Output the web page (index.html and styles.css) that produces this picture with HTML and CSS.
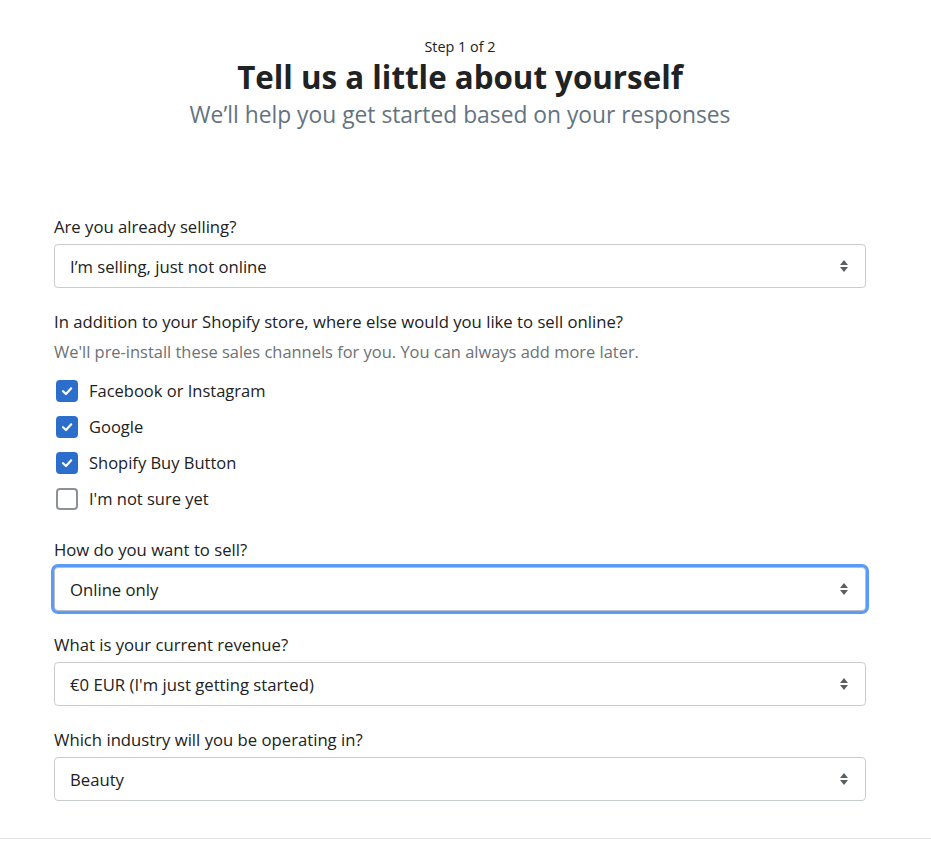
FILE: index.html
```html
<!DOCTYPE html>
<html lang="en">
<head>
    <meta charset="UTF-8">
    <meta name="viewport" content="width=device-width, initial-scale=1.0">
    <title>Tell us a little about yourself</title>
    <link rel="stylesheet" href="styles.css">
</head>
<body>
    <div class="page">
        <div class="header">
            <p class="step">Step 1 of 2</p>
            <h1>Tell us a little about yourself</h1>
            <p class="subtitle">We’ll help you get started based on your responses</p>
        </div>

        <form class="survey">
            <div class="field">
                <label>Are you already selling?</label>
                <div class="select">
                    <span>I’m selling, just not online</span>
                    <svg class="arrows" width="10" height="14" viewBox="0 0 10 14"><path d="M5 1 L9 6 H1 Z M1 8 H9 L5 13 Z" fill="#5c5f62"/></svg>
                </div>
            </div>

            <div class="field">
                <label>In addition to your Shopify store, where else would you like to sell online?</label>
                <p class="help">We'll pre-install these sales channels for you. You can always add more later.</p>
                <div class="checks">
                    <div class="check-row">
                        <span class="box checked"><svg width="14" height="14" viewBox="0 0 14 14"><path d="M3 7.2 L6 10 L11.2 4.3" fill="none" stroke="#fff" stroke-width="2.2" stroke-linecap="round" stroke-linejoin="round"/></svg></span>
                        Facebook or Instagram
                    </div>
                    <div class="check-row">
                        <span class="box checked"><svg width="14" height="14" viewBox="0 0 14 14"><path d="M3 7.2 L6 10 L11.2 4.3" fill="none" stroke="#fff" stroke-width="2.2" stroke-linecap="round" stroke-linejoin="round"/></svg></span>
                        Google
                    </div>
                    <div class="check-row">
                        <span class="box checked"><svg width="14" height="14" viewBox="0 0 14 14"><path d="M3 7.2 L6 10 L11.2 4.3" fill="none" stroke="#fff" stroke-width="2.2" stroke-linecap="round" stroke-linejoin="round"/></svg></span>
                        Shopify Buy Button
                    </div>
                    <div class="check-row">
                        <span class="box"></span>
                        I'm not sure yet
                    </div>
                </div>
            </div>

            <div class="field">
                <label>How do you want to sell?</label>
                <div class="select focused">
                    <span>Online only</span>
                    <svg class="arrows" width="10" height="14" viewBox="0 0 10 14"><path d="M5 1 L9 6 H1 Z M1 8 H9 L5 13 Z" fill="#5c5f62"/></svg>
                </div>
            </div>

            <div class="field">
                <label>What is your current revenue?</label>
                <div class="select">
                    <span>€0 EUR (I'm just getting started)</span>
                    <svg class="arrows" width="10" height="14" viewBox="0 0 10 14"><path d="M5 1 L9 6 H1 Z M1 8 H9 L5 13 Z" fill="#5c5f62"/></svg>
                </div>
            </div>

            <div class="field">
                <label>Which industry will you be operating in?</label>
                <div class="select">
                    <span>Beauty</span>
                    <svg class="arrows" width="10" height="14" viewBox="0 0 10 14"><path d="M5 1 L9 6 H1 Z M1 8 H9 L5 13 Z" fill="#5c5f62"/></svg>
                </div>
            </div>
        </form>
    </div>
    <div class="footer"></div>
</body>
</html>
```

FILE: styles.css
```css
/* Reset default margin and padding */
* {
    margin: 0;
    padding: 0;
    box-sizing: border-box;
}

body {
    font-family: "Open Sans", "Noto Sans", Arial, sans-serif;
    color: #202223;
    background-color: #fff;
}

.page {
    width: 823px;
    padding-right: 11px;
    margin: 0 auto;
}

/* Heading block */
.header {
    text-align: center;
    padding-top: 37px;
}

.step {
    font-size: 14.4px;
    line-height: 20px;
}

h1 {
    font-size: 31.3px;
    line-height: 40px;
    font-weight: 700;
    color: #202223;
}

.subtitle {
    font-size: 22.8px;
    line-height: 34px;
    color: #637381;
    margin-top: 1px;
}

/* Form */
.survey {
    margin-top: 83px;
}

.field {
    margin-bottom: 22px;
}

label {
    display: block;
    font-size: 16.7px;
    line-height: 24px;
    margin-bottom: 5px;
}

.select {
    display: flex;
    align-items: center;
    justify-content: space-between;
    height: 44px;
    padding: 0 16px 0 15px;
    border: 1px solid #c9cccf;
    border-radius: 4px;
    font-size: 16.7px;
    background-color: #fff;
}

.select.focused {
    border-color: #babfc3;
    box-shadow: 0 0 0 3px #5b9bf8;
}

.help {
    font-size: 16.45px;
    line-height: 24px;
    color: #6d7175;
    margin-top: 6px;
}

.checks {
    margin-top: 15px;
    margin-bottom: 27px;
}

.check-row {
    display: flex;
    align-items: center;
    gap: 11px;
    font-size: 16.5px;
    line-height: 24px;
    margin-bottom: 12px;
    padding-left: 2px;
}

.check-row:last-child {
    margin-bottom: 0;
}

.box {
    display: flex;
    align-items: center;
    justify-content: center;
    width: 22px;
    height: 22px;
    border: 2px solid #8c9196;
    border-radius: 4px;
}

.box.checked {
    background-color: #2c6ecb;
    border-color: #2c6ecb;
}

.footer {
    margin-top: 37px;
    border-top: 1px solid #e1e3e5;
    height: 20px;
}
```
